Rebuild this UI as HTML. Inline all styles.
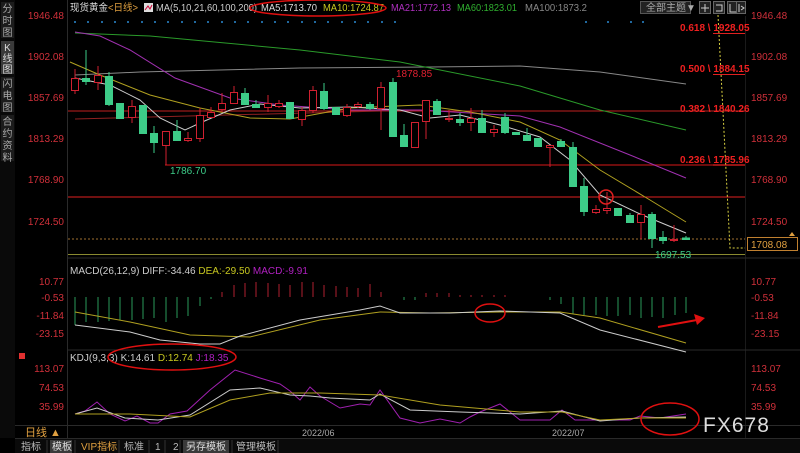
<!DOCTYPE html>
<html><head><meta charset="utf-8"><style>
html,body{margin:0;padding:0;background:#000;width:800px;height:453px;overflow:hidden}
svg{display:block}
text{font-family:"Liberation Sans","Noto Sans CJK SC",sans-serif}
</style></head><body>
<svg width="800" height="453" viewBox="0 0 800 453" xmlns="http://www.w3.org/2000/svg">
<rect width="800" height="453" fill="#000"/>
<!-- sidebar -->
<rect x="0" y="0" width="15" height="438" fill="#0a0a0a"/>
<rect x="1" y="2" width="13" height="36" fill="#1c1c1c"/>
<rect x="1" y="41" width="13" height="33" fill="#3a3a3a"/>
<rect x="1" y="77" width="13" height="35" fill="#1c1c1c"/>
<rect x="1" y="115" width="13" height="46" fill="#1c1c1c"/>
<g font-size="10" fill="#aaa" text-anchor="middle">
<text x="7.5" y="12">分</text><text x="7.5" y="24">时</text><text x="7.5" y="36">图</text>
<text x="7.5" y="51" fill="#ddd">K</text><text x="7.5" y="62" fill="#ddd">线</text><text x="7.5" y="73" fill="#ddd">图</text>
<text x="7.5" y="87">闪</text><text x="7.5" y="99">电</text><text x="7.5" y="111">图</text>
<text x="7.5" y="125">合</text><text x="7.5" y="137">约</text><text x="7.5" y="149">资</text><text x="7.5" y="161">料</text>
</g>
<!-- frame lines -->
<line x1="67.5" y1="0" x2="67.5" y2="438" stroke="#2a2a2a"/>
<line x1="745.5" y1="16" x2="745.5" y2="438" stroke="#1a1a1a"/>
<line x1="67" y1="258" x2="800" y2="258" stroke="#2a2a2a"/>
<line x1="67" y1="350" x2="800" y2="350" stroke="#2a2a2a"/>
<line x1="15" y1="425.5" x2="800" y2="425.5" stroke="#2a2a2a"/>
<line x1="15" y1="438.5" x2="800" y2="438.5" stroke="#2a2a2a"/>
<!-- axis labels -->
<g font-size="10" fill="#d0303a" text-anchor="end">
<text x="64" y="19">1946.48</text><text x="64" y="60">1902.08</text><text x="64" y="101">1857.69</text><text x="64" y="142">1813.29</text><text x="64" y="183">1768.90</text><text x="64" y="225">1724.50</text>
<text x="64" y="285">10.77</text><text x="64" y="301">-0.53</text><text x="64" y="319">-11.84</text><text x="64" y="337">-23.15</text>
<text x="64" y="372">113.07</text><text x="64" y="391">74.53</text><text x="64" y="410">35.99</text>
</g>
<g font-size="10" fill="#d0303a">
<text x="751" y="19">1946.48</text><text x="751" y="60">1902.08</text><text x="751" y="101">1857.69</text><text x="751" y="142">1813.29</text><text x="751" y="183">1768.90</text><text x="751" y="225">1724.50</text>
<text x="751" y="285">10.77</text><text x="751" y="301">-0.53</text><text x="751" y="319">-11.84</text><text x="751" y="337">-23.15</text>
<text x="751" y="372">113.07</text><text x="751" y="391">74.53</text><text x="751" y="410">35.99</text>
</g>
<!-- title row -->
<g font-size="10">
<text x="70" y="11" fill="#ddd" textLength="68" lengthAdjust="spacingAndGlyphs">现货黄金<tspan fill="#e0a040">&lt;日线&gt;</tspan></text>
<rect x="144" y="3" width="9" height="9" fill="#ddd"/><path d="M145 10 L148 6 L150 9 L152 5" stroke="#c03" fill="none"/>
<text x="156" y="11" fill="#ccc" textLength="101" lengthAdjust="spacingAndGlyphs">MA(5,10,21,60,100,200)</text>
<text x="261" y="11" fill="#ddd" textLength="56" lengthAdjust="spacingAndGlyphs">MA5:1713.70</text>
<text x="323" y="11" fill="#c8c820" textLength="61" lengthAdjust="spacingAndGlyphs">MA10:1724.87</text>
<text x="391" y="11" fill="#b030c0" textLength="60" lengthAdjust="spacingAndGlyphs">MA21:1772.13</text>
<text x="457" y="11" fill="#30b030" textLength="60" lengthAdjust="spacingAndGlyphs">MA60:1823.01</text>
<text x="525" y="11" fill="#888" textLength="62" lengthAdjust="spacingAndGlyphs">MA100:1873.2</text>
<rect x="640.5" y="1.5" width="50" height="12" fill="#222" stroke="#555"/>
<text x="646" y="11" fill="#aaa">全部主题▼</text>
</g>
<g fill="#222" stroke="#666">
<rect x="699.5" y="1.5" width="11" height="12"/><rect x="713.5" y="1.5" width="11" height="12"/><rect x="727.5" y="1.5" width="11" height="12"/><rect x="736.5" y="1.5" width="9" height="12"/>
</g>
<g stroke="#ccc" fill="none"><path d="M705 4v8M701 8h8"/><path d="M716 5h6v6h-6"/><path d="M730 4v8h6"/><path d="M739 4v8M741 6l3 2-3 2"/></g>
<!-- blue dots -->
<g fill="#2a8ad0">
<circle cx="75" cy="22" r="1"/><circle cx="88" cy="22" r="1"/><circle cx="102" cy="22" r="1"/><circle cx="115" cy="22" r="1"/><circle cx="128" cy="22" r="1"/><circle cx="142" cy="22" r="1"/><circle cx="155" cy="22" r="1"/><circle cx="168" cy="22" r="1"/><circle cx="182" cy="22" r="1"/><circle cx="195" cy="22" r="1"/><circle cx="208" cy="22" r="1"/><circle cx="222" cy="22" r="1"/><circle cx="235" cy="22" r="1"/><circle cx="248" cy="22" r="1"/><circle cx="262" cy="22" r="1"/><circle cx="275" cy="22" r="1"/><circle cx="288" cy="22" r="1"/><circle cx="302" cy="22" r="1"/><circle cx="315" cy="22" r="1"/><circle cx="328" cy="22" r="1"/><circle cx="342" cy="22" r="1"/><circle cx="355" cy="22" r="1"/><circle cx="368" cy="22" r="1"/><circle cx="382" cy="22" r="1"/><circle cx="395" cy="22" r="1"/>
<circle cx="586" cy="22" r="1"/><circle cx="608" cy="22" r="1"/><circle cx="631" cy="22" r="1"/><circle cx="643" cy="22" r="1"/>
</g>
<!-- fib / horizontal lines -->
<line x1="68" y1="111" x2="745" y2="111" stroke="#c02020"/>
<line x1="75" y1="119" x2="420" y2="110" stroke="#902020"/>
<line x1="165" y1="165" x2="745" y2="165" stroke="#901010" stroke-width="1.5"/>
<line x1="68" y1="197" x2="745" y2="197" stroke="#e02020"/>
<line x1="68" y1="239" x2="745" y2="239" stroke="#a07030" stroke-dasharray="2,2"/>
<line x1="68" y1="254.5" x2="745" y2="254.5" stroke="#8a8a30"/>
<path d="M718 15 L730 248 L745 248" stroke="#d8d040" fill="none" stroke-dasharray="2,2"/>
<g font-size="10" fill="#f02020" font-weight="bold">
<text x="680" y="31">0.618 \ 1928.05</text>
<text x="680" y="72">0.500 \ 1884.15</text>
<text x="680" y="112">0.382 \ 1840.26</text>
<text x="680" y="163">0.236 \ 1785.96</text>
</g>
<g stroke="#e02020"><line x1="713" y1="33.5" x2="745" y2="33.5"/><line x1="713" y1="74.5" x2="745" y2="74.5"/><line x1="713" y1="165" x2="745" y2="165"/></g>
<rect x="747.5" y="237.5" width="50" height="13" fill="#000" stroke="#c08030"/>
<text x="751" y="248" font-size="10" fill="#e0a040">1708.08</text>
<path d="M792 232 l3 4 h-6z" fill="#e0a040"/>
<!-- MA lines -->
<g fill="none" stroke-width="1">
<polyline stroke="#888" points="75,75 140,72 300,68 430,67 520,66 600,72 686,84"/>
<polyline stroke="#2a9a2a" points="75,33 150,36 300,50 400,62 520,86 600,110 686,130"/>
<polyline stroke="#a030b0" points="75,32 100,36 130,50 175,78 230,98 280,105 350,110 420,110 520,116 560,127 630,155 686,178"/>
<polyline stroke="#b0a020" points="70,62 100,75 150,95 200,108 250,118 290,119 350,108 420,105 470,112 520,122 560,140 600,170 650,200 686,222"/>
<polyline stroke="#ccc" points="75,78 110,85 140,100 160,118 185,130 200,123 230,110 260,104 300,108 350,107 400,110 430,118 460,115 500,125 540,137 570,160 600,195 640,214 686,233"/>
</g>
<!-- candles -->
<g stroke-width="1">
<g stroke="#d02030" fill="#000">
<line x1="75" y1="69" x2="75" y2="94"/><rect x="71.5" y="78.5" width="7" height="12"/>
<line x1="98" y1="66" x2="98" y2="90"/><rect x="94.5" y="75.5" width="7" height="7"/>
<line x1="132" y1="100" x2="132" y2="123"/><rect x="128.5" y="106.5" width="7" height="11"/>
<line x1="166" y1="131" x2="166" y2="165"/><rect x="162.5" y="131.5" width="7" height="14"/>
<line x1="188" y1="132" x2="188" y2="142"/><rect x="184.5" y="138.5" width="7" height="2"/>
<line x1="200" y1="108" x2="200" y2="142"/><rect x="196.5" y="115.5" width="7" height="23"/>
<line x1="211" y1="107" x2="211" y2="118"/><rect x="207.5" y="112.5" width="7" height="5"/>
<line x1="222" y1="93" x2="222" y2="112"/><rect x="218.5" y="103.5" width="7" height="6"/>
<line x1="234" y1="86" x2="234" y2="104"/><rect x="230.5" y="92.5" width="7" height="11"/>
<line x1="268" y1="95" x2="268" y2="112"/><rect x="264.5" y="103.5" width="7" height="4"/>
<line x1="279" y1="100" x2="279" y2="108"/><rect x="275.5" y="103.5" width="7" height="3"/>
<line x1="302" y1="107" x2="302" y2="126"/><rect x="298.5" y="110.5" width="7" height="9"/>
<line x1="313" y1="86" x2="313" y2="113"/><rect x="309.5" y="90.5" width="7" height="20"/>
<line x1="347" y1="104" x2="347" y2="117"/><rect x="343.5" y="107.5" width="7" height="8"/>
<line x1="358" y1="102" x2="358" y2="108"/><rect x="354.5" y="104.5" width="7" height="2"/>
<line x1="381" y1="82" x2="381" y2="130"/><rect x="377.5" y="87.5" width="7" height="21"/>
<line x1="415" y1="122" x2="415" y2="147"/><rect x="411.5" y="122.5" width="7" height="25"/>
<line x1="426" y1="100" x2="426" y2="139"/><rect x="422.5" y="100.5" width="7" height="21"/>
<line x1="449" y1="110" x2="449" y2="122"/><rect x="445.5" y="118.5" width="7" height="1"/>
<line x1="471" y1="108" x2="471" y2="131"/><rect x="467.5" y="118.5" width="7" height="4"/>
<line x1="494" y1="125" x2="494" y2="137"/><rect x="490.5" y="129.5" width="7" height="3"/>
<line x1="550" y1="145" x2="550" y2="167"/><rect x="546.5" y="145.5" width="7" height="2"/>
<line x1="596" y1="205" x2="596" y2="214"/><rect x="592.5" y="209.5" width="7" height="3"/>
<line x1="607" y1="192" x2="607" y2="214"/><rect x="603.5" y="208.5" width="7" height="2"/>
<line x1="641" y1="205" x2="641" y2="239"/><rect x="637.5" y="214.5" width="7" height="8"/>
<line x1="674" y1="225" x2="674" y2="242"/><rect x="670.5" y="239.5" width="7" height="1"/>
</g>
<g stroke="#3dcc88" fill="#3dcc88">
<line x1="86" y1="50" x2="86" y2="85"/><rect x="82.5" y="78.5" width="7" height="3"/>
<line x1="109" y1="72" x2="109" y2="106"/><rect x="105.5" y="76.5" width="7" height="28"/>
<rect x="116.5" y="103.5" width="7" height="15"/>
<rect x="139.5" y="105.5" width="7" height="28"/>
<line x1="154" y1="126" x2="154" y2="153"/><rect x="150.5" y="133.5" width="7" height="9"/>
<line x1="177" y1="120" x2="177" y2="141"/><rect x="173.5" y="131.5" width="7" height="9"/>
<line x1="245" y1="88" x2="245" y2="105"/><rect x="241.5" y="93.5" width="7" height="11"/>
<line x1="256" y1="100" x2="256" y2="108"/><rect x="252.5" y="104.5" width="7" height="3"/>
<rect x="286.5" y="102.5" width="7" height="16"/>
<line x1="324" y1="83" x2="324" y2="110"/><rect x="320.5" y="91.5" width="7" height="17"/>
<rect x="332.5" y="107.5" width="7" height="7"/>
<line x1="370" y1="102" x2="370" y2="110"/><rect x="366.5" y="104.5" width="7" height="4"/>
<line x1="393" y1="78" x2="393" y2="136"/><rect x="389.5" y="82.5" width="7" height="54"/>
<line x1="404" y1="124" x2="404" y2="147"/><rect x="400.5" y="135.5" width="7" height="11"/>
<line x1="437" y1="99" x2="437" y2="114"/><rect x="433.5" y="101.5" width="7" height="13"/>
<line x1="460" y1="113" x2="460" y2="126"/><rect x="456.5" y="119.5" width="7" height="3"/>
<line x1="482" y1="110" x2="482" y2="133"/><rect x="478.5" y="118.5" width="7" height="14"/>
<line x1="505" y1="113" x2="505" y2="134"/><rect x="501.5" y="117.5" width="7" height="15"/>
<rect x="512.5" y="132.5" width="7" height="2"/>
<line x1="527" y1="128" x2="527" y2="141"/><rect x="523.5" y="135.5" width="7" height="5"/>
<rect x="534.5" y="138.5" width="7" height="8"/>
<line x1="561" y1="139" x2="561" y2="146"/><rect x="557.5" y="141.5" width="7" height="5"/>
<line x1="573" y1="142" x2="573" y2="186"/><rect x="569.5" y="147.5" width="7" height="39"/>
<line x1="584" y1="178" x2="584" y2="216"/><rect x="580.5" y="186.5" width="7" height="25"/>
<rect x="614.5" y="208.5" width="7" height="7"/>
<line x1="630" y1="213" x2="630" y2="223"/><rect x="626.5" y="215.5" width="7" height="7"/>
<line x1="652" y1="212" x2="652" y2="248"/><rect x="648.5" y="214.5" width="7" height="24"/>
<line x1="663" y1="231" x2="663" y2="244"/><rect x="659.5" y="237.5" width="7" height="3"/>
<line x1="686" y1="236" x2="686" y2="240"/><rect x="682.5" y="238" width="7" height="1.5"/>
</g>
</g>
<g font-size="10">
<text x="396" y="77" fill="#e02030">1878.85</text>
<text x="170" y="174" fill="#3dcc88">1786.70</text>
<text x="655" y="258" fill="#3dcc88">1697.53</text>
</g>
<circle cx="606" cy="197" r="7" fill="none" stroke="#e02020" stroke-width="1.5"/>
<ellipse cx="318" cy="8" rx="68" ry="8" fill="none" stroke="#e01010" stroke-width="1.5"/>
<!-- MACD -->
<text x="70" y="274" font-size="10" fill="#ccc">MACD(26,12,9) DIFF:-34.46 <tspan fill="#c8c820">DEA:-29.50</tspan> <tspan fill="#b020c0">MACD:-9.91</tspan></text>
<g stroke="#2a9a5a">
<line x1="75" y1="297" x2="75" y2="325"/><line x1="86" y1="297" x2="86" y2="322"/><line x1="98" y1="297" x2="98" y2="322"/><line x1="109" y1="297" x2="109" y2="321"/><line x1="120" y1="297" x2="120" y2="320"/><line x1="132" y1="297" x2="132" y2="320"/><line x1="143" y1="297" x2="143" y2="319"/><line x1="154" y1="297" x2="154" y2="318"/><line x1="166" y1="297" x2="166" y2="322"/><line x1="177" y1="297" x2="177" y2="318"/><line x1="188" y1="297" x2="188" y2="316"/><line x1="200" y1="297" x2="200" y2="306"/><line x1="211" y1="297" x2="211" y2="299"/>
<line x1="404" y1="297" x2="404" y2="300"/><line x1="415" y1="297" x2="415" y2="300"/>
<line x1="550" y1="297" x2="550" y2="300"/><line x1="561" y1="297" x2="561" y2="304"/><line x1="573" y1="297" x2="573" y2="314"/><line x1="584" y1="297" x2="584" y2="315"/><line x1="596" y1="297" x2="596" y2="315"/><line x1="607" y1="297" x2="607" y2="316"/><line x1="618" y1="297" x2="618" y2="316"/><line x1="630" y1="297" x2="630" y2="315"/><line x1="641" y1="297" x2="641" y2="318"/><line x1="652" y1="297" x2="652" y2="317"/><line x1="663" y1="297" x2="663" y2="318"/><line x1="675" y1="297" x2="675" y2="315"/><line x1="686" y1="297" x2="686" y2="313"/>
</g>
<g stroke="#b02030">
<line x1="222" y1="292" x2="222" y2="297"/><line x1="234" y1="285" x2="234" y2="297"/><line x1="245" y1="283" x2="245" y2="297"/><line x1="256" y1="282" x2="256" y2="297"/><line x1="268" y1="283" x2="268" y2="297"/><line x1="279" y1="284" x2="279" y2="297"/><line x1="290" y1="285" x2="290" y2="297"/><line x1="302" y1="282" x2="302" y2="297"/><line x1="313" y1="282" x2="313" y2="297"/><line x1="324" y1="285" x2="324" y2="297"/><line x1="336" y1="286" x2="336" y2="297"/><line x1="347" y1="287" x2="347" y2="297"/><line x1="358" y1="288" x2="358" y2="297"/><line x1="370" y1="284" x2="370" y2="297"/><line x1="381" y1="292" x2="381" y2="297"/>
<line x1="426" y1="293" x2="426" y2="297"/><line x1="437" y1="293" x2="437" y2="297"/><line x1="449" y1="293" x2="449" y2="297"/><line x1="460" y1="295" x2="460" y2="297"/><line x1="471" y1="295" x2="471" y2="297"/><line x1="482" y1="295" x2="482" y2="297"/><line x1="494" y1="295" x2="494" y2="297"/><line x1="505" y1="295" x2="505" y2="297"/>
</g>
<polyline fill="none" stroke="#b0a020" points="75,312 130,322 190,335 250,337 320,320 380,312 430,313 500,312 560,312 600,318 686,343"/>
<polyline fill="none" stroke="#ccc" points="75,325 130,332 160,340 200,344 220,344 240,336 300,320 360,310 380,306 400,313 450,313 500,311 560,313 600,330 686,352"/>
<ellipse cx="490" cy="313" rx="15" ry="9" fill="none" stroke="#e01010" stroke-width="1.5"/>
<line x1="658" y1="327" x2="697" y2="320" stroke="#e01010" stroke-width="2"/>
<path d="M705 318 L694 314 L697 325 Z" fill="#e01010"/>
<!-- KDJ -->
<rect x="19" y="353" width="6" height="6" fill="#e03030"/>
<text x="70" y="361" font-size="10" fill="#ccc">KDJ(9,3,3) K:14.61  <tspan fill="#c8c820">D:12.74</tspan>  <tspan fill="#b020c0">J:18.35</tspan></text>
<ellipse cx="172" cy="357" rx="64" ry="13" fill="none" stroke="#e01010" stroke-width="1.5"/>
<polyline fill="none" stroke="#a020b0" points="75,414 85,411 97,402 110,414 125,421 137,416 150,423 158,423 170,414 187,411 210,390 235,370 260,378 280,384 290,391 300,400 310,387 320,396 340,408 360,404 370,405 380,390 400,418 420,423 440,419 460,423 470,417 480,412 500,404 520,420 550,420 562,410 575,420 610,420 630,420 640,416 660,418 686,414"/>
<polyline fill="none" stroke="#ccc" points="75,414 97,408 125,418 158,420 190,415 230,390 260,388 290,395 310,396 330,398 370,400 380,394 410,410 460,412 520,414 562,411 600,421 640,418 686,417"/>
<polyline fill="none" stroke="#b0a020" points="75,414 130,414 190,417 230,400 270,393 320,393 380,395 440,405 520,412 562,412 600,420 640,418 686,418"/>
<ellipse cx="670" cy="419" rx="29" ry="16" fill="none" stroke="#e01010" stroke-width="1.5"/>
<text x="703" y="432" font-size="21" fill="#ddd" letter-spacing="1">FX678</text>
<!-- date row -->
<text x="25" y="436" font-size="11" fill="#e0a040">日线 ▲</text>
<line x1="67.5" y1="425" x2="67.5" y2="438" stroke="#2a2a2a"/>
<g font-size="9" fill="#aaa"><text x="302" y="436">2022/06</text><text x="552" y="436">2022/07</text></g>
<!-- bottom tabs -->
<rect x="15" y="439" width="785" height="14" fill="#0a0a0a"/>
<rect x="50" y="440" width="22" height="13" fill="#3a3a3a"/>
<rect x="183" y="440" width="46" height="13" fill="#3a3a3a"/>
<g font-size="10" fill="#bbb">
<text x="21" y="450">指标</text><text x="52" y="450" fill="#ddd">模板</text><text x="81" y="450" fill="#e0a040">VIP指标</text><text x="124" y="450">标准</text><text x="155" y="450">1</text><text x="173" y="450">2</text><text x="186" y="450" fill="#ddd">另存模板</text><text x="236" y="450">管理模板</text>
</g>
<g stroke="#333"><line x1="47" y1="440" x2="47" y2="453"/><line x1="75" y1="440" x2="75" y2="453"/><line x1="119" y1="440" x2="119" y2="453"/><line x1="149" y1="440" x2="149" y2="453"/><line x1="165" y1="440" x2="165" y2="453"/><line x1="180" y1="440" x2="180" y2="453"/><line x1="232" y1="440" x2="232" y2="453"/><line x1="278" y1="440" x2="278" y2="453"/></g>
</svg>
</body></html>
